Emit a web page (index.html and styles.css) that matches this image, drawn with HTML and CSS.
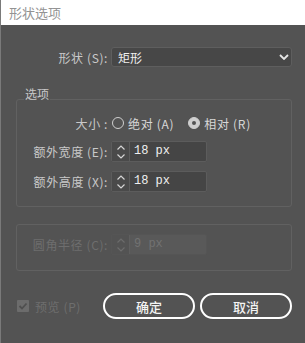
FILE: index.html
```html
<!DOCTYPE html>
<html lang="zh">
<head>
<meta charset="utf-8">
<link rel="stylesheet" href="styles.css">
</head>
<body>
<div class="window">
  <div class="titlebar">形状选项</div>
  <div class="dialog">
    <div class="row row-top">
      <span class="label">形状 (S):</span>
      <div class="select">
        <span class="select-text">矩形</span>
        <svg class="chev" width="10" height="6" viewBox="0 0 10 6"><path d="M1 1 L5 5 L9 1" fill="none" stroke="#e6e6e6" stroke-width="1.8"/></svg>
      </div>
    </div>

    <fieldset class="group group-main">
      <legend class="legend">选项</legend>
      <div class="row row-radio">
        <span class="label">大小 :</span>
        <span class="radio"></span><span class="radio-text">绝对 (A)</span>
        <span class="radio checked"></span><span class="radio-text">相对 (R)</span>
      </div>
      <div class="row row-input">
        <span class="label">额外宽度 (E):</span>
        <div class="spin">
          <span class="spin-btn"><svg width="10" height="16" viewBox="0 0 10 16"><path d="M1.5 5.5 L5 2 L8.5 5.5 M1.5 10.5 L5 14 L8.5 10.5" fill="none" stroke="#d6d6d6" stroke-width="1.2"/></svg></span>
          <span class="spin-val">18 px</span>
        </div>
      </div>
      <div class="row row-input">
        <span class="label">额外高度 (X):</span>
        <div class="spin">
          <span class="spin-btn"><svg width="10" height="16" viewBox="0 0 10 16"><path d="M1.5 5.5 L5 2 L8.5 5.5 M1.5 10.5 L5 14 L8.5 10.5" fill="none" stroke="#d6d6d6" stroke-width="1.2"/></svg></span>
          <span class="spin-val">18 px</span>
        </div>
      </div>
    </fieldset>

    <div class="group group-disabled">
      <div class="row row-input">
        <span class="label">圆角半径 (C):</span>
        <div class="spin disabled">
          <span class="spin-btn"><svg width="10" height="16" viewBox="0 0 10 16"><path d="M1.5 5.5 L5 2 L8.5 5.5 M1.5 10.5 L5 14 L8.5 10.5" fill="none" stroke="#6c6c6c" stroke-width="1.2"/></svg></span>
          <span class="spin-val">9 px</span>
        </div>
      </div>
    </div>

    <div class="footer">
      <div class="preview">
        <span class="checkbox"><svg width="10" height="10" viewBox="0 0 10 10"><path d="M1.5 5 L4 7.5 L8.5 2.5" fill="none" stroke="#4f4f4f" stroke-width="1.8"/></svg></span>
        <span class="preview-text">预览 (P)</span>
      </div>
      <button class="btn">确定</button>
      <button class="btn">取消</button>
    </div>
  </div>
</div>
</body>
</html>
```

FILE: styles.css
```css
html, body {
  margin: 0;
  padding: 0;
  background: #535353;
}
body {
  font-family: "Noto Sans CJK SC", "Noto Sans", sans-serif;
  font-size: 12px;
  color: #c9c9c9;
}
.window {
  width: 305px;
  height: 343px;
  overflow: hidden;
  border-left: 1px solid #7a7a7a;
  box-sizing: border-box;
}
.titlebar {
  height: 25px;
  background: #ffffff;
  color: #939393;
  font-size: 13px;
  line-height: 25px;
  padding-left: 8px;
  margin-left: -1px;
  border-left: 1px solid #c8c8c8;
}
.dialog {
  padding: 22px 13px 0 15px;
}
.row {
  display: flex;
  align-items: center;
}
.label {
  flex: 0 0 auto;
  text-align: right;
  white-space: nowrap;
  letter-spacing: 0.6px;
}
.row-top .label {
  width: 92px;
  margin-right: 3px;
}
.select {
  flex: 1;
  height: 20px;
  box-sizing: border-box;
  background: #474747;
  border: 1px solid #5e5e5e;
  border-radius: 3px;
  display: flex;
  align-items: center;
  justify-content: space-between;
  padding: 0 2px 0 6px;
}
.select-text {
  color: #f0f0f0;
  font-size: 12px;
}
.group {
  margin: 0;
  border: 1px solid #616161;
  border-radius: 3px;
  min-width: 0;
}
.group-main {
  margin-top: 20px;
  padding: 12px 0 14px 0;
}
.legend {
  padding: 0 1px 10px 1px;
  margin-left: 7px;
  line-height: 14px;
  font-size: 12px;
}
.group .label {
  width: 91px;
  margin-right: 3px;
}
.row-radio {
  height: 18px;
  margin-top: -9px;
}
.group .row-radio .label {
  margin-right: 4px;
}
.radio {
  width: 10px;
  height: 10px;
  border: 1.5px solid #cfcfcf;
  border-radius: 50%;
  margin-right: 4px;
}
.radio.checked {
  background: #cfcfcf;
  border-color: #cfcfcf;
  position: relative;
  margin-left: 14px;
}
.radio.checked::after {
  content: "";
  position: absolute;
  left: 3px;
  top: 3px;
  width: 4px;
  height: 4px;
  border-radius: 50%;
  background: #535353;
}
.radio-text {
  color: #d8d8d8;
  letter-spacing: 0.7px;
}
.row-input {
  margin-top: 9px;
}
.spin {
  width: 96px;
  height: 21px;
  box-sizing: border-box;
  border: 1px solid #5c5c5c;
  border-radius: 2px;
  background: #454545;
  display: flex;
  align-items: stretch;
}
.spin-btn {
  width: 17px;
  border-right: 1px solid #5c5c5c;
  background: #4a4a4a;
  display: flex;
  align-items: center;
  justify-content: center;
}
.spin-val {
  padding-left: 4px;
  font-family: "Liberation Mono", monospace;
  font-size: 12px;
  line-height: 19px;
  color: #f0f0f0;
}
.group-disabled {
  margin-top: 17px;
  padding: 0 0 15px 0;
  color: #6e6e6e;
}
.spin.disabled {
  border-color: #555555;
  background: #595959;
}
.spin.disabled .spin-btn {
  background: #535353;
  border-right-color: #5f5f5f;
}
.spin.disabled .spin-val {
  color: #727272;
}
.footer {
  display: flex;
  align-items: center;
  margin-top: 22px;
}
.preview {
  display: flex;
  align-items: center;
  width: 86px;
  margin-left: 1px;
  color: #6e6e6e;
  letter-spacing: 0.6px;
}
.checkbox {
  width: 12px;
  height: 12px;
  background: #6c6c6c;
  border-radius: 1px;
  display: flex;
  align-items: center;
  justify-content: center;
  margin-right: 6px;
}
.btn {
  width: 92px;
  height: 26px;
  box-sizing: border-box;
  border: 2px solid #ffffff;
  border-radius: 13px;
  background: transparent;
  color: #f4f4f4;
  font-family: "Noto Sans CJK SC", sans-serif;
  font-size: 13px;
  font-weight: 500;
  padding: 0;
}
.btn + .btn {
  margin-left: 5px;
}
```
